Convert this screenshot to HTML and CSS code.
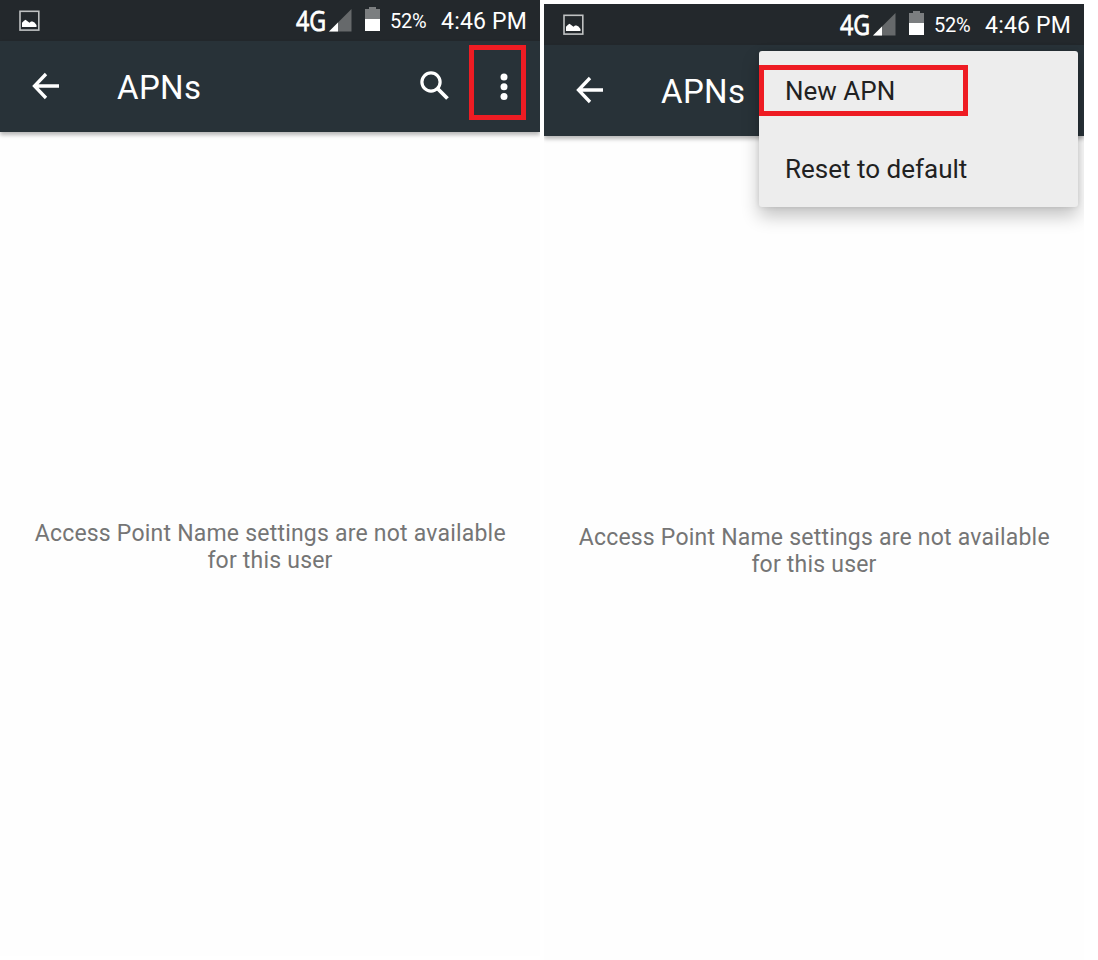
FILE: index.html
```
<!DOCTYPE html>
<html lang="en">
<head>
<meta charset="utf-8">
<title>APNs</title>
<link rel="stylesheet" href="styles.css">
</head>
<body>
<main class="board">
  <section class="phone">
    <header class="status">
      <svg class="picture" width="22" height="22" viewBox="0 0 22 22"><rect x="1" y="1.3" width="18.8" height="18.8" fill="none" stroke="#bfc1c2" stroke-width="1.6"/><path d="M3 17v-4.2L5 10.8l1.5-1 4 3 1.5-1.2h1.5l2 1 2 2.4V17z" fill="#fff"/></svg>
      <span class="network">4G</span>
      <svg class="signal" width="23" height="23" viewBox="0 0 23 23"><path d="M0 22.5L22.5 0v22.5z" fill="#66696b"/><path d="M0 22.5L9 13.5v9z" fill="#fff"/></svg>
      <svg class="battery" width="15" height="24" viewBox="0 0 15 24"><path d="M0 2h4V0h7v2h4v10H0z" fill="#7b7e80"/><path d="M0 12h15v12H0z" fill="#fff"/></svg>
      <span class="percent">52%</span>
      <span class="clock">4:46 PM</span>
    </header>
    <nav class="toolbar">
      <svg class="back" width="28" height="28" viewBox="0 0 28 28"><path d="M27 14H3M14 2L2.5 14l11.5 12" fill="none" stroke="#fff" stroke-width="3.3"/></svg>
      <h1 class="title">APNs</h1>
      <svg class="search" width="30" height="30" viewBox="0 0 30 30"><circle cx="11" cy="11" r="9.1" fill="none" stroke="#fff" stroke-width="3.2"/><path d="M17.5 17.5l10 10" fill="none" stroke="#fff" stroke-width="3.8"/></svg>
      <span class="more"><svg width="8" height="28" viewBox="0 0 8 28"><circle cx="4" cy="4" r="3.5" fill="#fff"/><circle cx="4" cy="13.8" r="3.5" fill="#fff"/><circle cx="4" cy="23.5" r="3.5" fill="#fff"/></svg></span>
    </nav>
    <p class="empty">Access Point Name settings are not available<br>for this user</p>
  </section>
  <section class="phone second">
    <header class="status">
      <svg class="picture" width="22" height="22" viewBox="0 0 22 22"><rect x="1" y="1.3" width="18.8" height="18.8" fill="none" stroke="#bfc1c2" stroke-width="1.6"/><path d="M3 17v-4.2L5 10.8l1.5-1 4 3 1.5-1.2h1.5l2 1 2 2.4V17z" fill="#fff"/></svg>
      <span class="network">4G</span>
      <svg class="signal" width="23" height="23" viewBox="0 0 23 23"><path d="M0 22.5L22.5 0v22.5z" fill="#66696b"/><path d="M0 22.5L9 13.5v9z" fill="#fff"/></svg>
      <svg class="battery" width="15" height="24" viewBox="0 0 15 24"><path d="M0 2h4V0h7v2h4v10H0z" fill="#7b7e80"/><path d="M0 12h15v12H0z" fill="#fff"/></svg>
      <span class="percent">52%</span>
      <span class="clock">4:46 PM</span>
    </header>
    <nav class="toolbar">
      <svg class="back" width="28" height="28" viewBox="0 0 28 28"><path d="M27 14H3M14 2L2.5 14l11.5 12" fill="none" stroke="#fff" stroke-width="3.3"/></svg>
      <h1 class="title">APNs</h1>
    </nav>
    <p class="empty">Access Point Name settings are not available<br>for this user</p>
    <div class="menu">
      <div class="item marked">New APN</div>
      <div class="item">Reset to default</div>
    </div>
  </section>
</main>
</body>
</html>
```
FILE: styles.css
```
body {
  margin: 0;
  background: #fff;
  font-family: Roboto, "Liberation Sans", sans-serif;
}
.board {
  display: flex;
  gap: 4px;
  width: 1098px;
  height: 960px;
  overflow: hidden;
}
.phone {
  position: relative;
  width: 540px;
  height: 956px;
  overflow: hidden;
  background: #fefefe;
}
.second {
  margin-top: 4px;
}
.status {
  display: flex;
  align-items: flex-start;
  height: 41px;
  background: #23282c;
  color: #fff;
  white-space: nowrap;
}
.picture {
  margin: 10px 0 0 19px;
}
.network {
  width: 34px;
  margin: 6px 0 0 255px;
  font: 400 28px/28px "Open Sans", sans-serif;
  -webkit-text-stroke: .8px #fff;
  transform: scaleX(.83);
  transform-origin: left;
}
.signal {
  margin: 8.5px 0 0 -1px;
}
.battery {
  margin: 7px 0 0 13px;
}
.percent {
  width: 51px;
  margin: 9px 0 0 10px;
  font-size: 20px;
  line-height: 24px;
  letter-spacing: -.2px;
}
.clock {
  margin-top: 8px;
  font-size: 23px;
  line-height: 28px;
  letter-spacing: .2px;
}
.toolbar {
  display: flex;
  align-items: flex-start;
  height: 91px;
  background: #283238;
  box-shadow: 0 3px 4px rgba(0, 0, 0, .28);
  color: #fff;
}
.back {
  margin: 31px 0 0 31.5px;
}
.title {
  width: 303px;
  margin: 27px 0 0 57.5px;
  font-size: 33px;
  font-weight: 400;
  line-height: 40px;
  letter-spacing: .35px;
}
.search {
  margin: 29.5px 0 0;
}
.more {
  box-sizing: border-box;
  width: 57px;
  height: 75px;
  margin: 4px 0 0 19px;
  padding: 22.5px 0 0 26.3px;
  border: 5px solid #ee1c23;
}
.more svg {
  display: block;
}
.empty {
  margin: 388px 0 0;
  color: #757575;
  font-size: 23px;
  line-height: 27px;
  letter-spacing: .21px;
  text-align: center;
  text-indent: .5px;
  white-space: nowrap;
}
.menu {
  position: absolute;
  top: 47px;
  left: 215px;
  box-sizing: border-box;
  width: 319px;
  height: 156px;
  padding-top: 14px;
  border-radius: 3px;
  background: #ededed;
  box-shadow: 0 9px 18px rgba(0, 0, 0, .24), 0 0 5px rgba(0, 0, 0, .1);
}
.item {
  box-sizing: border-box;
  height: 51px;
  padding-left: 26px;
  color: #212121;
  font-size: 26px;
  line-height: 53px;
}
.marked {
  width: 209px;
  margin-bottom: 27px;
  padding-left: 21px;
  border: 5px solid #ee1c23;
  line-height: 43px;
}
```
